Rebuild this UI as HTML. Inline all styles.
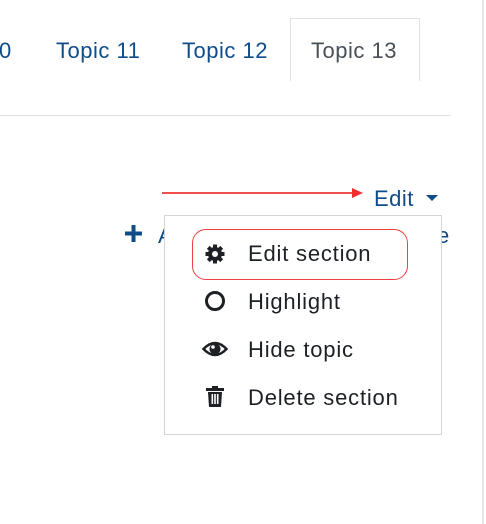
<!DOCTYPE html>
<html><head><style>
body{margin:0;width:486px;height:524px;background:#fff;position:relative;overflow:hidden;font-family:"Liberation Sans",Arial,sans-serif;}
.a{position:absolute;white-space:nowrap;}
.blue{color:#0f4c8a;}
.t{font-size:22px;letter-spacing:0.5px;}
.item{position:absolute;left:248px;font-size:22px;letter-spacing:0.8px;color:#1d2125;white-space:nowrap;}
</style></head><body>
<div style="position:absolute;left:482px;top:0;width:2px;height:524px;background:#e6e6e9"></div>
<div style="position:absolute;left:290px;top:18px;width:128px;height:62px;border:1px solid #dee2e6;border-bottom:none;"></div>
<div style="position:absolute;left:0;top:115px;width:451px;height:1px;background:#dee2e6"></div>
<div class="a t blue" style="left:-1px;top:38px">0</div>
<div class="a t blue" style="left:56px;top:38px">Topic 11</div>
<div class="a t blue" style="left:182px;top:38px">Topic 12</div>
<div class="a t" style="left:311px;top:38px;color:#495057">Topic 13</div>
<div style="position:absolute;left:162px;top:192px;width:192px;height:2px;background:#f25050"></div>
<div style="position:absolute;left:352px;top:188px;width:0;height:0;border-left:11px solid #f03030;border-top:5px solid transparent;border-bottom:5px solid transparent"></div>
<div class="a t blue" style="left:374px;top:186px">Edit</div>
<div style="position:absolute;left:426px;top:195px;border-left:6px solid transparent;border-right:6px solid transparent;border-top:6px solid #0f4c8a"></div>
<svg style="position:absolute;left:124px;top:224px" width="19" height="19"><path d="M9.5 1v17M1 9.5h17" stroke="#0f4c8a" stroke-width="4"/></svg>
<div class="a t blue" style="left:158px;top:223px">A</div>
<div class="a t blue" style="left:437px;top:223px">e</div>
<div style="position:absolute;left:164px;top:215px;width:276px;height:218px;border:1px solid #d5d5d5;background:#fff"></div>
<div style="position:absolute;left:192px;top:229px;width:214px;height:49px;border:1.5px solid #f04040;border-radius:14px"></div>
<svg style="position:absolute;left:204px;top:243px" width="22" height="22" viewBox="0 0 22 22"><g fill="#1d2125"><circle cx="11" cy="11" r="7"/><g stroke="#1d2125" stroke-width="4"><line x1="11" y1="1.5" x2="11" y2="20.5"/><line x1="1.5" y1="11" x2="20.5" y2="11"/><line x1="4.3" y1="4.3" x2="17.7" y2="17.7"/><line x1="17.7" y1="4.3" x2="4.3" y2="17.7"/></g></g><circle cx="11" cy="11" r="3" fill="#fff"/></svg>
<div class="item" style="top:241px">Edit section</div>
<svg style="position:absolute;left:204px;top:290px" width="22" height="22"><circle cx="11" cy="11" r="8.5" fill="none" stroke="#1d2125" stroke-width="3"/></svg>
<div class="item" style="top:289px">Highlight</div>
<svg style="position:absolute;left:202px;top:339px" width="26" height="20" viewBox="0 0 26 20"><path d="M1.5 10 Q13 -2 24.5 10 Q13 22 1.5 10Z" fill="none" stroke="#1d2125" stroke-width="2.5"/><circle cx="13" cy="10" r="5.5" fill="#1d2125"/><circle cx="11" cy="8" r="1.8" fill="#fff"/></svg>
<div class="item" style="top:337px">Hide topic</div>
<svg style="position:absolute;left:206px;top:386px" width="18" height="22" viewBox="0 0 18 22"><rect x="0" y="2" width="18" height="3" fill="#1d2125"/><rect x="6" y="0" width="6" height="3" fill="#1d2125"/><path d="M2 6h14l-1 15H3z" fill="#1d2125"/><rect x="5.5" y="8" width="1.6" height="10" fill="#fff"/><rect x="8.2" y="8" width="1.6" height="10" fill="#fff"/><rect x="10.9" y="8" width="1.6" height="10" fill="#fff"/></svg>
<div class="item" style="top:385px">Delete section</div>
</body></html>
